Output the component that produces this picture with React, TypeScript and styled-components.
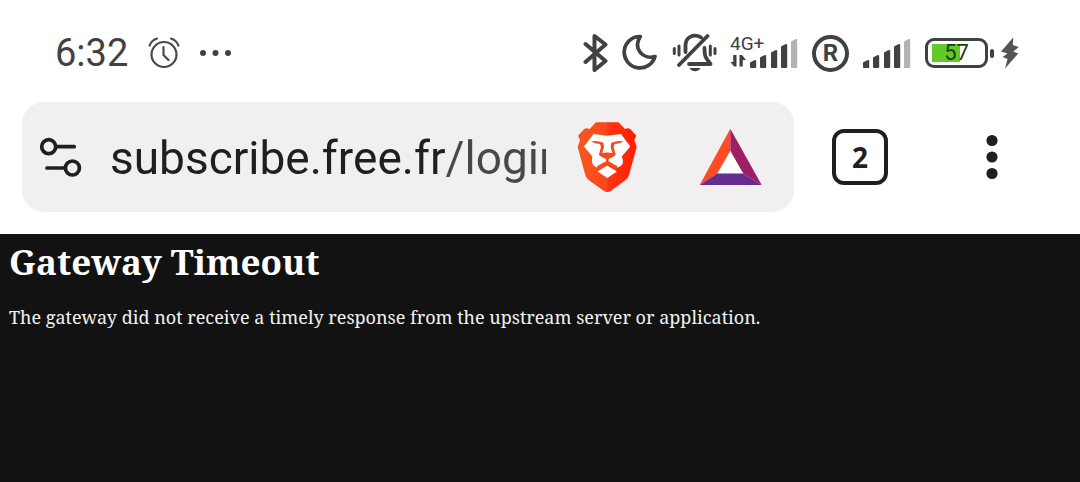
import React from "react";
import styled, { createGlobalStyle } from "styled-components";

const GlobalStyle = createGlobalStyle`
  html, body, #root { min-height: 100vh; }
  body { margin: 0; background: #121212; }
  #root { display: flex; flex-direction: column; }
  * { box-sizing: border-box; }
`;

const dark = "#414141";
const ink = "#1f1f1f";

const Chrome = styled.header`
  background: #fff;
  font-family: Roboto, "Noto Sans", sans-serif;
`;

const StatusBar = styled.div`
  display: flex;
  align-items: center;
  justify-content: space-between;
  height: 102px;
  padding: 4px 60px 0 55px;
  color: ${dark};
`;

const StatusGroup = styled.div<{ $gap: number }>`
  display: flex;
  align-items: center;
  gap: ${(p) => p.$gap}px;
`;

const Clock = styled.time`
  font-size: 38px;
  line-height: 44px;
`;

const Icon = styled.svg`
  display: block;
  flex: none;
`;

const Network = styled.div`
  position: relative;
`;

const NetworkLabel = styled.span`
  position: absolute;
  top: -4px;
  left: 0;
  font-size: 19px;
  line-height: 20px;
`;

const Registered = styled.span`
  display: flex;
  align-items: center;
  justify-content: center;
  width: 37px;
  height: 37px;
  border: 4px solid ${dark};
  border-radius: 50%;
  font-size: 24px;
  line-height: 24px;
  font-weight: 700;
`;

const Power = styled.div`
  display: flex;
  align-items: center;
  gap: 2px;
`;

const Battery = styled.div`
  display: flex;
  align-items: center;
  justify-content: center;
  width: 63px;
  height: 30px;
  border: 3px solid ${dark};
  border-radius: 9px;
  background: linear-gradient(#62c92a, #62c92a) 4px 3px / 28px 18px no-repeat;
  color: #1d3f12;
  font-size: 22px;
  line-height: 24px;
`;

const BatteryTip = styled.span`
  width: 4px;
  height: 9px;
  margin-right: 5px;
  border-radius: 2px;
  background: ${dark};
`;

const Toolbar = styled.div`
  display: flex;
  align-items: center;
  padding: 0 68px 22px 22px;
`;

const AddressBar = styled.div`
  display: flex;
  align-items: center;
  flex: 1;
  min-width: 0;
  height: 110px;
  padding: 0 31px 0 17px;
  border-radius: 22px;
  background: #f1eff0;
`;

const PlainButton = styled.button`
  display: flex;
  align-items: center;
  justify-content: center;
  flex: none;
  padding: 0;
  border: 0;
  background: none;
  color: ${ink};
`;

const MenuButton = styled(PlainButton)`
  width: 40px;
  height: 56px;
`;

const AddressInput = styled.input`
  flex: 1;
  min-width: 0;
  height: 64px;
  margin: 0 31px 0 27px;
  padding: 2px 0 0;
  border: 0;
  outline: 0;
  font-family: inherit;
  font-size: 46px;
  background: linear-gradient(90deg, ${ink} 335px, #484848 335px);
  background-clip: text;
  -webkit-background-clip: text;
  -webkit-text-fill-color: transparent;
`;

const AddressActions = styled.div`
  display: flex;
  align-items: center;
  gap: 62px;
`;

const TabButton = styled.button`
  flex: none;
  width: 56px;
  height: 56px;
  margin: 0 84px 0 38px;
  padding: 0;
  border: 4px solid ${ink};
  border-radius: 12px;
  background: none;
  color: ${ink};
  font: 700 28px/48px "Noto Sans", sans-serif;
`;

const Page = styled.main`
  flex: 1;
  padding: 8px 9px;
  color: #fff;
  font-family: "Noto Serif", "Droid Serif", "DejaVu Serif", serif;
`;

const Title = styled.h1`
  margin: 0 0 22px;
  font-size: 35px;
  line-height: 40px;
`;

const Message = styled.p`
  margin: 0;
  color: #f2f2f2;
  font-size: 18px;
  line-height: 26px;
`;

const BARS = [
  [0, 22], [10, 17], [21, 12], [31, 6], [41, 1],
];

function Bars({ x = 0 }: { x?: number }) {
  return (
    <>
      {BARS.map(([left, top], i) => (
        <path
          key={left}
          d={`M${x + left} ${top + 2.5}l4.200-2.300q2-.8 2 1V29q0 1-1 1h-4.200q-1 0-1-1z`}
          fill={i === 4 ? "#b3b3b3" : dark}
        />
      ))}
    </>
  );
}

function AlarmIcon() {
  return (
    <Icon width="34" height="34" viewBox="0 0 34 34" fill="none" stroke="#4a4a4a" strokeWidth="2.2" strokeLinecap="round">
      <circle cx="17" cy="18.500" r="12.500" />
      <path d="M16.500 11v8l5 5M2.500 9.500C4 6 6.500 3.500 10 2.500M31.500 9.500C30 6 27.500 3.500 24 2.500" />
    </Icon>
  );
}

function EllipsisIcon() {
  return (
    <Icon width="32" height="8" viewBox="0 0 32 8" fill={dark}>
      <circle cx="3" cy="4" r="3" />
      <circle cx="15.500" cy="4" r="3" />
      <circle cx="28" cy="4" r="3" />
    </Icon>
  );
}

function BluetoothIcon() {
  return (
    <Icon width="26" height="40" viewBox="0 0 26 40" fill="none" stroke={dark} strokeWidth="4" strokeLinecap="round" strokeLinejoin="round">
      <path d="M3.500 11 23.500 28 12.500 37V3l11 8.500L3.500 29" />
    </Icon>
  );
}

function MoonIcon() {
  return (
    <Icon width="36" height="38" viewBox="0 0 36 38" fill="none" stroke={dark} strokeWidth="3.700" strokeLinejoin="round">
      <path d="M19.300 2.500A15.700 15.700 0 1 0 34 22.500C22 26 11.500 14.500 19.300 2.500z" />
    </Icon>
  );
}

function MutedBellIcon() {
  return (
    <Icon width="47" height="40" viewBox="0 0 47 40" fill="none" stroke={dark} strokeWidth="3.800" strokeLinecap="round" strokeLinejoin="round">
      <g transform="translate(1 -1)">
        <path d="M8 33 36.500 4M14.500 20v-6.500C14.500 4.500 23 1.500 30 5.300M33.500 16c0 8 .5 9 6 16H18" />
        <path d="M3.300 16.500v5M8 14v9M39.300 14v9M44 16.500v5" strokeWidth="3" />
        <path d="M18.500 36h11q-2 3.300-5.500 3.300T18.500 36z" fill={dark} stroke="none" />
      </g>
    </Icon>
  );
}

function BoltIcon() {
  return (
    <Icon width="19" height="32" viewBox="0 0 19 32" fill="#555">
      <path d="M12.200 .5 0 14.500 6.500 16.500 1.500 20 6.500 22 4 31.500 17.300 16.500 12.300 14.500 17.800 10 11.800 8z" />
    </Icon>
  );
}

function SiteSettingsIcon() {
  return (
    <Icon width="44" height="41" viewBox="0 0 44 41" fill="none" stroke={ink} strokeWidth="3.700" strokeLinecap="round">
      <circle cx="9.700" cy="9.700" r="7" />
      <path d="M17 9.700h18.200M8 31h18" />
      <circle cx="33.400" cy="31" r="7" />
    </Icon>
  );
}

function LionLogo() {
  return (
    <Icon width="60" height="71" viewBox="0 0 60 71">
      <defs>
        <linearGradient id="mane">
          <stop offset="0" stopColor="#f4591f" />
          <stop offset=".49" stopColor="#fb471c" />
          <stop offset=".51" stopColor="#fc3514" />
          <stop offset="1" stopColor="#ff2000" />
        </linearGradient>
      </defs>
      <path fill="url(#mane)" d="M19 .3h22.500L48 7q3-1.500 5.500.3l5.800 6.400-2 4.300 2.400 7L52.300 52q-1 4-4 6.200L34 68.700q-3.700 2.500-7.400 0L12 58.200Q9 56 8 52L.7 25 3 18 1 13.700 7 7.300Q9 5.500 12.500 7z" />
      <path fill="#fff" d="M16.500 12 30 13.700 44 12 53.300 24.500 44.800 34.500q3 7-1.800 10l-3 1.200L35 41.300 30.300 39l-5 2.300-5 4.400q-7-2-5-11.200L7 24.500z" />
      <path fill="#fff" d="M20.500 49.500 30.300 43.500 40 49.500 30.300 56z" />
      <path fill="#f6491d" d="M14 19.500q5-1.700 12.300 1.300l.7 4.200-1.800 6q5.100-1 10.200 0l-1.800-6 .7-4.200q7.300-3 12.300-1.300-4 2.200-9 2.600l-1 3 2 7.400q0 1.500-8.300 5-8.300-3.500-8.300-5l2-7.400-1-3q-5-.4-9-2.600z" />
      <path fill="none" stroke="#f6491d" strokeWidth="2.600" strokeLinejoin="round" d="M30.300 35v5.500M20.500 45.500 30.300 40.500 40 45.500" />
    </Icon>
  );
}

function TriangleLogo() {
  return (
    <Icon width="64" height="58" viewBox="0 0 64 58">
      <path fill="#fff" d="M31.300 22.700 18.300 45.500h26z" />
      <path fill="#ff4c25" d="M31.300 .8v21.900L18.300 45.500.7 57z" />
      <path fill="#9e1f63" d="M31.300 .8v21.900l13 22.800L62.700 57z" />
      <path fill="#662d91" d="M.7 57 18.300 45.500h26L62.700 57z" />
    </Icon>
  );
}

export default function App() {
  return (
    <>
      <GlobalStyle />
      <Chrome>
        <StatusBar>
          <StatusGroup $gap={19}>
            <Clock>6:32</Clock>
            <AlarmIcon />
            <EllipsisIcon />
          </StatusGroup>
          <StatusGroup $gap={13}>
            <BluetoothIcon />
            <MoonIcon />
            <MutedBellIcon />
            <Network>
              <NetworkLabel>4G+</NetworkLabel>
              <Icon width="69" height="31" viewBox="0 0 69 31">
                <path fill={dark} d="M6.500 17v11.500H4L.5 24h2.700v-7zM9.500 28.500V17H12l4 5h-3.200v6.500z" />
                <Bars x={20} />
              </Icon>
            </Network>
            <Registered>R</Registered>
            <Icon width="50" height="31" viewBox="0 0 50 31">
              <Bars x={1} />
            </Icon>
            <Power>
              <Battery>57</Battery>
              <BatteryTip />
              <BoltIcon />
            </Power>
          </StatusGroup>
        </StatusBar>
        <Toolbar>
          <AddressBar>
            <PlainButton aria-label="Site settings">
              <SiteSettingsIcon />
            </PlainButton>
            <AddressInput aria-label="Address" defaultValue="subscribe.free.fr/login" spellCheck={false} />
            <AddressActions>
              <PlainButton aria-label="Shields">
                <LionLogo />
              </PlainButton>
              <PlainButton aria-label="Rewards">
                <TriangleLogo />
              </PlainButton>
            </AddressActions>
          </AddressBar>
          <TabButton aria-label="2 open tabs">2</TabButton>
          <MenuButton aria-label="Menu">
            <Icon width="12" height="46" viewBox="0 0 12 46" fill={ink}>
              <circle cx="6" cy="6.500" r="5.600" />
              <circle cx="6" cy="23" r="5.600" />
              <circle cx="6" cy="39.500" r="5.600" />
            </Icon>
          </MenuButton>
        </Toolbar>
      </Chrome>
      <Page>
        <Title>Gateway Timeout</Title>
        <Message>The gateway did not receive a timely response from the upstream server or application.</Message>
      </Page>
    </>
  );
}
